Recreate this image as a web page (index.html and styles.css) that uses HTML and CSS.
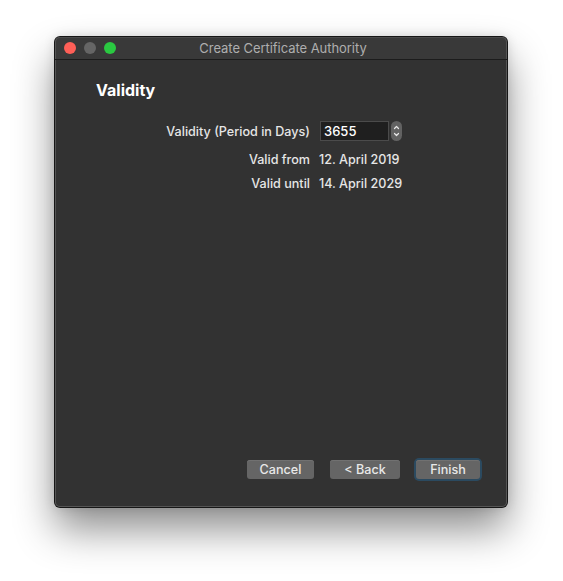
FILE: index.html
```html
<!DOCTYPE html>
<html>
<head>
<meta charset="utf-8">
<link rel="stylesheet" href="styles.css">
</head>
<body>
<div class="window">
  <div class="titlebar">
    <div class="lights">
      <span class="light red"></span>
      <span class="light gray"></span>
      <span class="light green"></span>
    </div>
    <div class="title">Create Certificate Authority</div>
  </div>
  <div class="content">
    <h1 class="heading">Validity</h1>
    <div class="form">
      <div class="label">Validity (Period in Days)</div>
      <div class="field">
        <div class="input">3655</div>
        <div class="stepper">
          <svg width="11" height="20" viewBox="0 0 11 20">
            <path d="M3.5 7.5 L5.5 5.5 L7.5 7.5" fill="none" stroke="#e8e8e8" stroke-width="1.2" stroke-linecap="round" stroke-linejoin="round"/>
            <path d="M3.5 12.5 L5.5 14.5 L7.5 12.5" fill="none" stroke="#e8e8e8" stroke-width="1.2" stroke-linecap="round" stroke-linejoin="round"/>
          </svg>
        </div>
      </div>
      <div class="label row2">Valid from</div>
      <div class="value row2">12. April 2019</div>
      <div class="label">Valid until</div>
      <div class="value">14. April 2029</div>
    </div>
    <div class="buttons">
      <button class="btn">Cancel</button>
      <button class="btn back">&lt; Back</button>
      <button class="btn default">Finish</button>
    </div>
  </div>
</div>
</body>
</html>
```

FILE: styles.css
```css
html, body {
  margin: 0;
  padding: 0;
  background: #ffffff;
}
html {
  height: 100%;
}
body {
  min-height: 100%;
  box-sizing: border-box;
  padding: 37px 0 0 55px;
  font-family: "Inter", "Liberation Sans", sans-serif;
  -webkit-font-smoothing: antialiased;
}
.window {
  width: 452px;
  height: 470px;
  background: #323232;
  border-radius: 5px;
  box-shadow: inset 0 0 0 1px #555555, 0 0 0 1px #161616, 0 22px 40px rgba(0,0,0,0.45), 0 0 12px rgba(0,0,0,0.15);
  display: flex;
  flex-direction: column;
  overflow: hidden;
}
.titlebar {
  height: 22px;
  flex: none;
  position: relative;
  background: #393939;
  border-bottom: 1px solid #1c1c1c;
  border-radius: 5px 5px 0 0;
  box-shadow: inset 0 1px 0 #4a4a4a, inset 1px 0 0 #555, inset -1px 0 0 #555;
  display: flex;
  align-items: center;
  justify-content: center;
}
.lights {
  position: absolute;
  left: 9px;
  top: 5px;
  display: flex;
  gap: 8px;
}
.light {
  width: 12px;
  height: 12px;
  border-radius: 50%;
  display: block;
}
.red { background: #fe5f57; }
.gray { background: #656565; }
.green { background: #2ac841; }
.title {
  color: #aeaeae;
  font-size: 13px;
  letter-spacing: -0.05px;
  padding-left: 4px;
}
.content {
  flex: 1;
  display: flex;
  flex-direction: column;
  padding: 20px 26px 28px 41px;
}
.heading {
  margin: 0;
  font-size: 16px;
  font-weight: 700;
  color: #ffffff;
  line-height: 20px;
}
.form {
  display: grid;
  grid-template-columns: 214px auto;
  column-gap: 9px;
  row-gap: 5px;
  margin-top: 21px;
  align-items: center;
  justify-content: start;
  color: #e6e6e6;
  font-size: 12.6px;
  font-weight: 500;
}
.label {
  text-align: right;
  line-height: 19px;
}
.value {
  line-height: 19px;
}
.row2 {
  margin-top: 4px;
}
.field {
  display: flex;
  align-items: center;
  gap: 2px;
  margin-left: 1px;
}
.input {
  width: 64px;
  height: 18px;
  padding-left: 3px;
  border: 1px solid #4b4b4b;
  background: #1f1f1f;
  color: #ffffff;
  font-size: 13px;
  line-height: 19px;
}
.stepper {
  width: 11px;
  height: 20px;
  border-radius: 5.5px;
  background: #626262;
  display: flex;
}
.buttons {
  margin-top: auto;
  display: flex;
  justify-content: flex-end;
  gap: 16px;
}
.btn {
  height: 19px;
  padding: 0;
  border: none;
  border-radius: 3px;
  background: #656565;
  color: #e8e8e8;
  font-family: inherit;
  font-size: 12.6px;
  font-weight: 500;
  line-height: 19px;
  width: 67px;
  box-shadow: inset 0 1px 0 #717171;
}
.back {
  width: 70px;
}
.default {
  width: 64px;
  margin-right: 1px;
  box-shadow: 0 0 0 2px #2b4a60, inset 0 1px 0 #717171;
}
```
